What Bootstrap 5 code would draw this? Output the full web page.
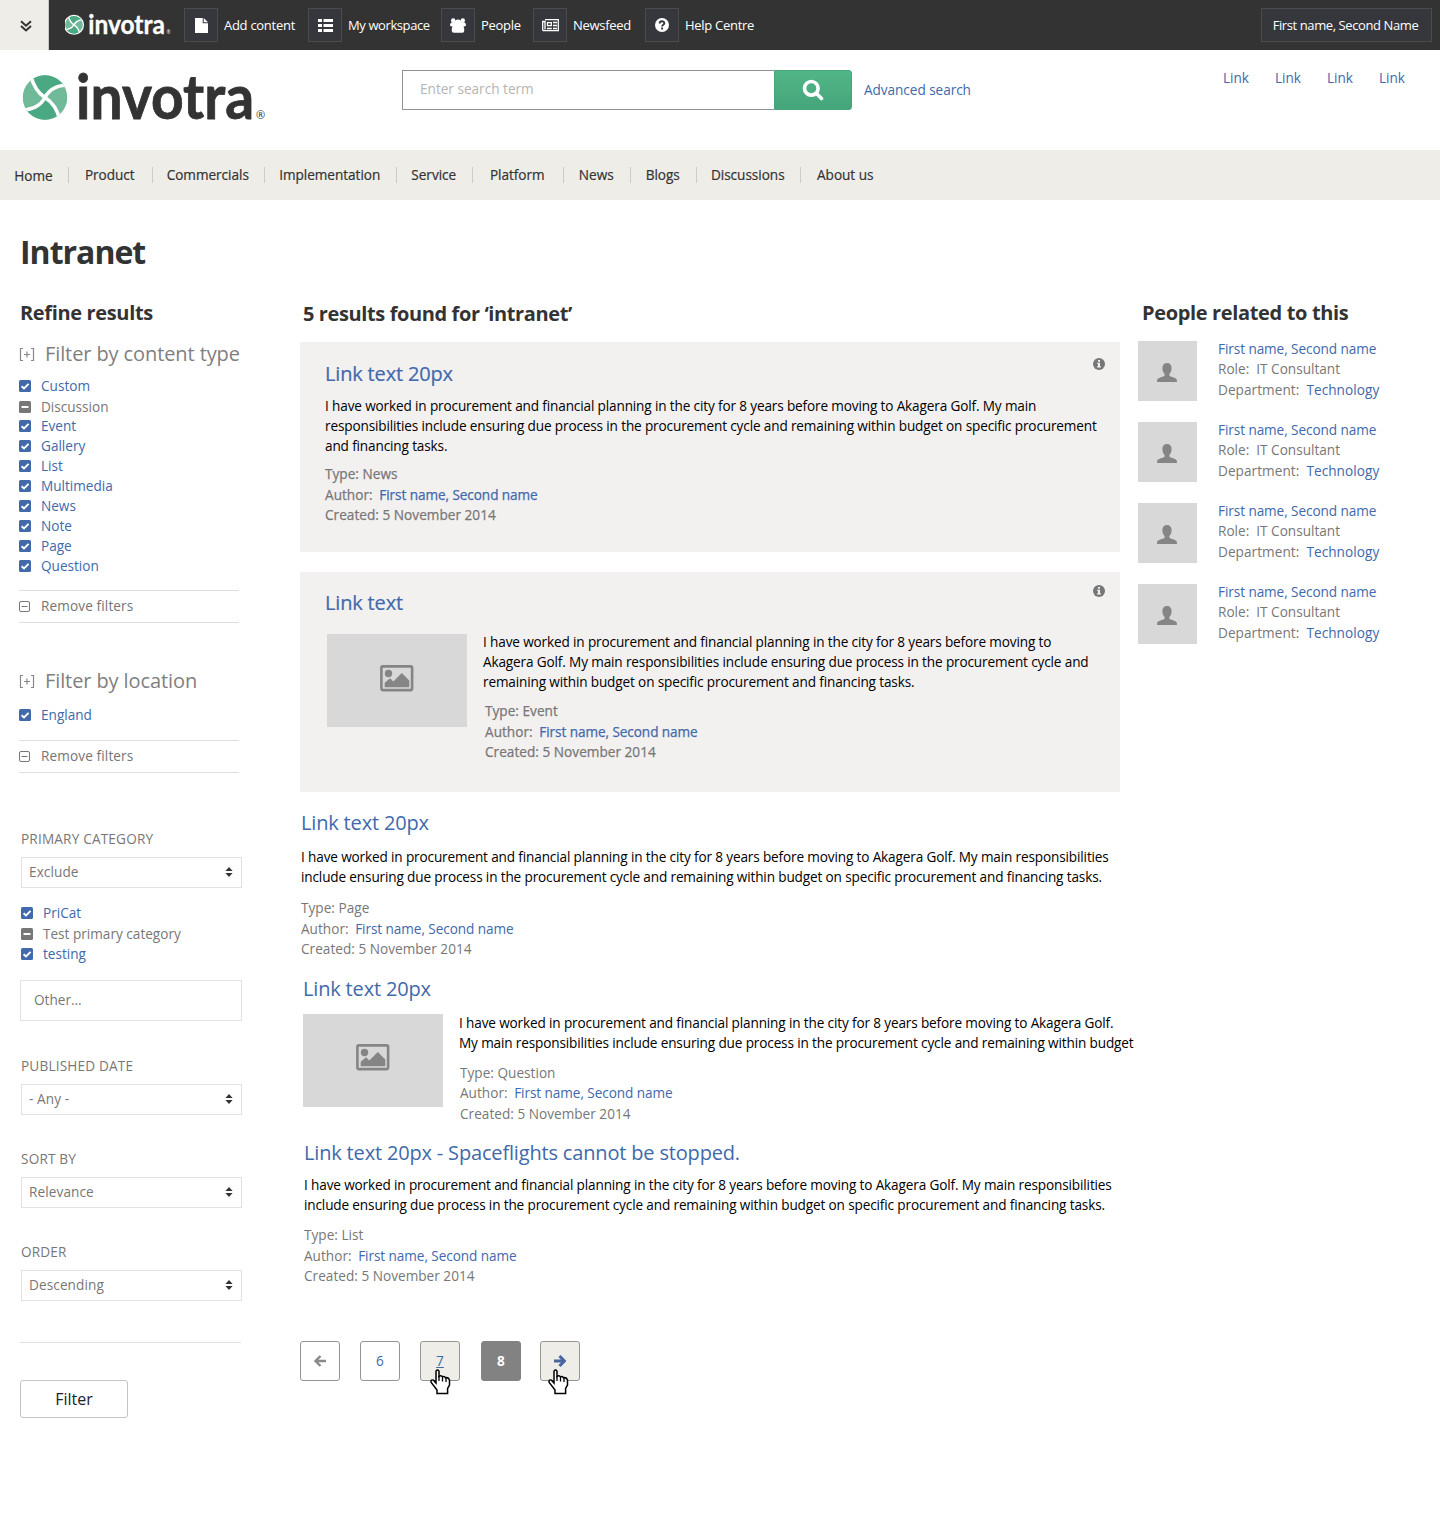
<!DOCTYPE html>
<html lang="en">
<head>
<meta charset="utf-8">
<meta name="viewport" content="width=device-width, initial-scale=1">
<title>Intranet search results</title>
<link href="https://cdn.jsdelivr.net/npm/bootstrap@5.3.0/dist/css/bootstrap.min.css" rel="stylesheet">
<style>
  :root { --link: #4169ab; --muted: #777; --dark: #333; --line: #dedede; --sand: #eeede8; }
  body { font: 13.6px/20px "Open Sans", "Noto Sans", sans-serif; letter-spacing: 0; color: var(--muted); background: #fff; }
  a { color: var(--link); text-decoration: none; }
  a:hover { color: var(--link); text-decoration: underline; }
  h1, h2, h3, p, ul, dl { margin: 0; }
  h1 { font-size: 32px; line-height: 40px; font-weight: 700; letter-spacing: -1px; color: var(--dark); }
  h2 { font-size: 20px; line-height: 24px; font-weight: 700; letter-spacing: -.35px; color: var(--dark); white-space: nowrap; }
  svg { display: block; flex: none; }

  /* utility bar */
  .util-bar { height: 50px; background: #333; color: #fff; font-size: 13px; letter-spacing: -.28px; }
  .util-toggle { width: 49px; background: var(--sand); border-right: 1px solid #c9c9c4; padding: 2px 0 0 3px; }
  .util-links { display: grid; grid-template-columns: 124px 133px 92px 112px 130px; margin-left: 13px; }
  .util-links a { color: #fff; gap: 6px; white-space: nowrap; }
  .util-links a:nth-child(2) { letter-spacing: -.4px; }
  .util-icon { width: 34px; height: 34px; background: #36373c; border: 1px solid #4b4b4e; }
  .util-user { height: 34px; width: 171px; margin-right: 8px; padding-right: 2px; background: #36373c; border: 1px solid #4b4b4e; letter-spacing: -.4px; }

  /* brand */
  .brand-text { font-family: Lato, "Open Sans", sans-serif; font-weight: 700; font-size: 62px; letter-spacing: 0; stroke: currentColor; stroke-width: .8px; }
  .brand-reg { font-family: "Open Sans", sans-serif; font-size: 11px; letter-spacing: 0; }
  .brand-main { margin-top: -16px; color: var(--dark); }

  /* masthead */
  .masthead { height: 100px; padding: 20px 35px 0 22px; }
  .search-form { width: 450px; margin-left: 136px; }
  .search-form .form-control { height: 40px; border: 1px solid #919191; border-right: 0; border-radius: 0; padding: 0 17px 3px; font-size: 13.6px; letter-spacing: 0; }
  .search-form .form-control::placeholder { color: #b5b5b5; }
  .search-go { width: 78px; height: 40px; background: linear-gradient(#51b687, #46a57b); border: 1px solid #46a57b; border-radius: 0 3px 3px 0; }
  .adv { margin: 10px 0 0 12px; letter-spacing: -.05px; }
  .quick-links { gap: 26px; margin-top: -2px; }

  /* main navigation */
  .site-nav { height: 50px; background: var(--sand); display: grid; grid-template-columns: 69px 84px 112px 132px 76px 91px 67px 66px 104px 90px; align-items: center; }
  .site-nav a { color: var(--dark); font-weight: 500; letter-spacing: -.03px; line-height: 16px; padding-right: 1.5px; text-align: center; border-right: 1px solid #ccc; -webkit-text-stroke: .2px currentColor; }
  .site-nav a:first-child { padding: 1px 1px 0 0; line-height: 15px; }
  .site-nav a:last-child { border: 0; }

  /* filters */
  .page-title { margin: 28px 0 0 20px; padding-top: 4px; }
  .page-cols { margin-top: 28px; }
  .filters { width: 221px; margin-left: 20px; padding-top: 1px; }
  .filter-head { font-size: 20px; line-height: 24px; letter-spacing: -.1px; gap: 10px; margin-left: -1px; color: #7f7f7f; white-space: nowrap; }
  .checks { list-style: none; padding: 0; margin-left: -1px; }
  .checks li { display: flex; align-items: center; gap: 10px; height: 20px; }
  .checks .is-mixed { padding-top: 2px; }
  .checks.is-inset { margin-left: 1px; }
  .remove-row { width: 220px; height: 33px; margin-left: -1px; gap: 10px; padding-bottom: 1px; border-top: 1px solid var(--line); border-bottom: 1px solid var(--line); color: #757575; letter-spacing: .12px; }
  .facet-label { display: block; margin-left: 1px; text-transform: uppercase; letter-spacing: .18px; }
  .facet-select { margin: 8px 0 0 1px; width: 221px; height: 31px; padding: 0 7px 2px; border: 1px solid #e2e2e2; border-radius: 0; color: var(--muted); font-size: 13.6px; line-height: 20px; letter-spacing: .1px;
    background-image: url("data:image/svg+xml,%3Csvg xmlns='http://www.w3.org/2000/svg' viewBox='0 0 8 10'%3E%3Cpath fill='%23333' d='M4 0 7.6 3.9H.4zM.4 6.1h7.2L4 10z'/%3E%3C/svg%3E"); background-size: 8px 10px; background-position: right 8px top 9px; }
  .other-box { width: 222px; height: 41px; border: 1px solid #e2e2e2; border-radius: 0; padding: 0 13px 2px; font-size: 13.6px; }
  .other-box::placeholder { color: var(--muted); }
  .filter-btn { width: 108px; height: 38px; border: 1px solid #c4c4c4; border-radius: 3px; background: #fff; font-size: 16px; color: #222; padding: 0; }

  /* results */
  .results { width: 820px; margin-left: 59px; padding-top: 2px; }
  .results h2 { margin-left: 3px; letter-spacing: -.39px; }
  .hit-title { font-size: 20px; line-height: 24px; font-weight: 400; letter-spacing: -.17px; }
  .promoted .hit-title { -webkit-text-stroke: .2px currentColor; }
  .hit-text { color: #000; letter-spacing: -.145px; white-space: nowrap; }
  .hit-meta { letter-spacing: .02px; }
  .hit-meta div { height: 20.5px; white-space: nowrap; }
  .hit-meta a { margin-left: 3px; letter-spacing: -.07px; }
  .promoted { background: #f3f1f0; position: relative; }
  .promoted .hit-meta { -webkit-text-stroke: .25px currentColor; letter-spacing: .03px; }
  .info-dot { position: absolute; right: 15px; }
  .thumb { width: 140px; height: 93px; background: #d8d8d8; color: #858585; padding-bottom: 5px; }
  .hit-a { height: 210px; padding: 20px 25px; }
  .hit-b { height: 220px; margin-top: 20px; padding: 19px 25px; }
  .hit-c { padding: 19px 1px 0; }
  .hit-d { padding: 17px 3px 0; }
  .hit-e { padding: 17px 4px 0; }

  /* pagination */
  .pager { margin-top: 54px; }
  .page-box { position: relative; width: 40px; height: 40px; border: 1px solid #959595; border-radius: 3px; background: #fff; }
  .page-box.is-hover { background: var(--sand); }
  .page-box.is-current { background: #828282; border-color: #828282; color: #fff; font-weight: 700; }
  .hand { position: absolute; top: 27px; }

  /* people */
  .people { width: 260px; margin-left: 18px; padding-top: 1px; }
  .person { height: 81px; gap: 21px; }
  .avatar { width: 59px; height: 60px; background: #d8d8d8; color: #858585; padding: 3px 2px 0 0; }
  .person-info { letter-spacing: 0; margin-top: -2px; white-space: nowrap; }
  .person-info div:first-child { letter-spacing: -.08px; }
  .person-info div:last-child { padding-top: 1px; letter-spacing: .05px; }
</style>
<script src="https://cdn.jsdelivr.net/npm/bootstrap@5.3.0/dist/js/bootstrap.bundle.min.js"></script>
</head>
<body>

<svg width="0" height="0" class="position-absolute" aria-hidden="true">
  <defs>
    <clipPath id="disc"><circle cx="22.5" cy="22.5" r="22.3"/></clipPath>
  </defs>
  <symbol id="globe" viewBox="0 0 45 45">
    <g clip-path="url(#disc)">
      <path fill="#70b999" d="M0 0h45v45H0z"/>
      <path fill="#4aa983" d="M8 -1C11 13 17 19 22.500 22.500C27 14 34 10 46 10V-1ZM37.500 46C35 33 29 26.500 22.500 22.500C18 30 11 34 -1 35.500V46Z"/>
      <path fill="none" stroke="#fff" stroke-width="3.600" d="M8 -1C11 13 17 19 22.500 22.500S35 33 37.500 46M46 10C34 10 27 14 22.500 22.500S11 34 -1 35.500"/>
    </g>
  </symbol>
  <symbol id="check-on" viewBox="0 0 12 12"><rect width="12" height="12" rx="1.500" fill="#4169ab"/><path d="M2.600 6.200 5 8.500 9.600 3.900" fill="none" stroke="#fff" stroke-width="1.900"/></symbol>
  <symbol id="check-mixed" viewBox="0 0 12 12"><rect width="12" height="12" rx="1.500" fill="#777"/><path d="M2.500 6h7" stroke="#fff" stroke-width="2"/></symbol>
  <symbol id="minus-box" viewBox="0 0 12 12"><rect x=".5" y="1.500" width="10" height="10" rx="1.500" fill="none" stroke="#777"/><path d="M2.500 6.500H8.500" stroke="#777"/></symbol>
  <symbol id="plus-box" viewBox="0 0 16 13"><path d="M4 .5H1.500v12H4M12 .5h2.500v12H12M8 3.500v6M5 6.500h6" fill="none" stroke="#888" stroke-width="1.200"/></symbol>
  <symbol id="info" viewBox="0 0 12 12"><circle cx="6" cy="6" r="6" fill="#777"/><path d="M5 2h2v1.700H5zM4.200 4.700H7v3.600h.9v1.300H4.100V8.300H5V6h-.8z" fill="#f3f1f0"/></symbol>
  <symbol id="picture" viewBox="0 0 34 27"><rect x="1.400" y="1.400" width="30.700" height="23.700" rx="1.500" fill="none" stroke="currentColor" stroke-width="2.600"/><circle cx="8.500" cy="8.500" r="3.700" fill="currentColor"/><path d="M4.700 22.300v-4.500l5.400-4.600 3.200 3.200L21.800 8l7.500 7.500v6.800z" fill="currentColor"/></symbol>
  <symbol id="person" viewBox="0 0 20 19"><path fill="currentColor" d="M10 0c3 0 4.600 2 4.600 5 0 2.600-.8 4.500-2.200 5.900v1.900c1.700 1.300 7.100 2 7.500 4.300V19H.1v-1.900c.4-2.300 5.800-3 7.500-4.300v-1.900C6.200 9.500 5.400 7.600 5.400 5c0-3 1.600-5 4.600-5z"/></symbol>
  <symbol id="hand" viewBox="0 0 21 26"><path d="M6 2.200Q7.500 0 9 2.200V7.500Q11 5.800 12.500 7.800 14.500 6.800 15.500 8.800 18.500 8 19.500 11V16L17.600 19.500V24.500H7V21L1.200 13.500Q.3 10 3.500 11.200L6 14Z" fill="#fff" stroke="#000" stroke-width="1.500"/><path d="M9 7v5M12.500 8v4.500M16 9v4" stroke="#000" stroke-width="1.300"/></symbol>
</svg>

<header>
  <div class="util-bar d-flex align-items-stretch">
    <a href="#" class="util-toggle d-flex align-items-center justify-content-center" aria-label="Collapse">
      <svg width="12" height="12" viewBox="0 0 12 12"><path d="M1 1.200 6 5.700l5-4.500M1 6 6 10.500 11 6" fill="none" stroke="#333" stroke-width="2"/></svg>
    </a>
    <a href="#" class="text-white ms-3" aria-label="invotra">
      <svg width="106" height="50" viewBox="0 -35 242 114">
        <circle cx="20.500" cy="21.500" r="23" fill="#fff"/><use href="#globe" x="0" y="1" width="41" height="41"/>
        <text class="brand-text" x="53" y="43" textLength="175" lengthAdjust="spacingAndGlyphs" fill="currentColor">invotra</text>
        <text class="brand-reg" x="232" y="43" fill="currentColor">®</text>
      </svg>
    </a>
    <nav class="util-links align-items-center">
      <a href="#" class="d-flex align-items-center"><span class="util-icon d-flex align-items-center justify-content-center"><svg width="13" height="15" viewBox="0 0 13 15"><path fill="#fff" d="M0 0h7.700v5.300H13V15H0zM8.700 0 13 4.300H8.700z"/></svg></span>Add content</a>
      <a href="#" class="d-flex align-items-center"><span class="util-icon d-flex align-items-center justify-content-center"><svg width="15" height="13" viewBox="0 0 15 13"><path fill="#fff" d="M0 0h4v3H0zM5.500 0H15v3H5.500zM0 5h4v3H0zM5.500 5H15v3H5.500zM0 10h4v3H0zM5.500 10H15v3H5.500z"/></svg></span>My workspace</a>
      <a href="#" class="d-flex align-items-center"><span class="util-icon d-flex align-items-center justify-content-center"><svg width="16" height="15" viewBox="0 0 16 15"><g fill="#fff"><circle cx="3.200" cy="2.500" r="2.200"/><circle cx="12.800" cy="2.500" r="2.200"/><circle cx="8" cy="4.800" r="3.200"/><path d="M0 7.500Q0 4.500 2.500 4.300H13.500Q16 4.500 16 7.500 15.500 8.500 13.500 8.500 14.300 10 14.300 12.500T12 14.800H4Q1.700 14.800 1.700 12.500T2.500 8.500Q.5 8.500 0 7.500z"/></g></svg></span>People</a>
      <a href="#" class="d-flex align-items-center"><span class="util-icon d-flex align-items-center justify-content-center"><svg width="17" height="13" viewBox="0 0 17 13"><path d="M3 .700h13.300v11H2Q.7 11.700.7 10.500V2.500H3V10.500" fill="none" stroke="#fff" stroke-width="1.300"/><path d="M5.500 3.700h3.800v3H5.500zM5 9.500h4.800M11 3.500h4M11 6.500h4M11 9.500h4" fill="none" stroke="#fff" stroke-width="1.300"/></svg></span>Newsfeed</a>
      <a href="#" class="d-flex align-items-center"><span class="util-icon d-flex align-items-center justify-content-center"><svg width="14" height="14" viewBox="0 0 14 14"><circle cx="7" cy="7" r="7" fill="#fff"/><path d="M4.700 5.400C4.700 2.500 9.300 2.600 9.300 5.200 9.300 6.800 7.100 6.700 7.100 8.500M7.100 9.500v1.900" fill="none" stroke="#36373c" stroke-width="1.900"/></svg></span>Help Centre</a>
    </nav>
    <a href="#" class="util-user d-flex align-items-center justify-content-center text-white ms-auto align-self-center">First name, Second Name</a>
  </div>

  <div class="masthead d-flex align-items-start">
    <a href="#" class="brand-main" aria-label="invotra">
      <svg width="244" height="80" viewBox="0 0 244 80">
        <use href="#globe" x="0.500" y="21" width="45" height="45"/>
        <text class="brand-text" x="54" y="65" textLength="178" lengthAdjust="spacingAndGlyphs" fill="currentColor">invotra</text>
        <text class="brand-reg" x="234" y="65" fill="currentColor">®</text>
      </svg>
    </a>
    <form class="search-form d-flex">
      <input class="form-control" type="text" placeholder="Enter search term">
      <button type="button" class="search-go d-flex align-items-center justify-content-center p-0 flex-shrink-0" aria-label="Search"><svg width="22" height="22" viewBox="0 0 22 22"><circle cx="9.300" cy="9.300" r="6.800" fill="none" stroke="#fff" stroke-width="3.600"/><path d="m14.500 14.500 5 5" stroke="#fff" stroke-width="3.600" stroke-linecap="round"/></svg></button>
    </form>
    <a href="#" class="adv text-nowrap">Advanced search</a>
    <div class="quick-links d-flex ms-auto"><a href="#">Link</a><a href="#">Link</a><a href="#">Link</a><a href="#">Link</a></div>
  </div>

  <nav class="site-nav">
    <a href="#">Home</a><a href="#">Product</a><a href="#">Commercials</a><a href="#">Implementation</a><a href="#">Service</a><a href="#">Platform</a><a href="#">News</a><a href="#">Blogs</a><a href="#">Discussions</a><a href="#">About us</a>
  </nav>
</header>

<main>
  <h1 class="page-title">Intranet</h1>
  <div class="page-cols d-flex align-items-start">

    <aside class="filters flex-shrink-0">
      <h2>Refine results</h2>
      <div class="filter-head d-flex align-items-center" style="margin-top:17px"><svg width="16" height="13"><use href="#plus-box"/></svg>Filter by content type</div>
      <ul class="checks" style="margin-top:10px">
        <li><svg width="12" height="12"><use href="#check-on"/></svg><a href="#">Custom</a></li>
        <li class="is-mixed"><svg width="12" height="12"><use href="#check-mixed"/></svg>Discussion</li>
        <li><svg width="12" height="12"><use href="#check-on"/></svg><a href="#">Event</a></li>
        <li><svg width="12" height="12"><use href="#check-on"/></svg><a href="#">Gallery</a></li>
        <li><svg width="12" height="12"><use href="#check-on"/></svg><a href="#">List</a></li>
        <li><svg width="12" height="12"><use href="#check-on"/></svg><a href="#">Multimedia</a></li>
        <li><svg width="12" height="12"><use href="#check-on"/></svg><a href="#">News</a></li>
        <li><svg width="12" height="12"><use href="#check-on"/></svg><a href="#">Note</a></li>
        <li><svg width="12" height="12"><use href="#check-on"/></svg><a href="#">Page</a></li>
        <li><svg width="12" height="12"><use href="#check-on"/></svg><a href="#">Question</a></li>
      </ul>
      <div class="remove-row d-flex align-items-center" style="margin-top:14px"><svg width="12" height="12"><use href="#minus-box"/></svg>Remove filters</div>

      <div class="filter-head d-flex align-items-center" style="margin-top:46px"><svg width="16" height="13"><use href="#plus-box"/></svg>Filter by location</div>
      <ul class="checks" style="margin-top:12px">
        <li><svg width="12" height="12"><use href="#check-on"/></svg><a href="#">England</a></li>
      </ul>
      <div class="remove-row d-flex align-items-center" style="margin-top:15px"><svg width="12" height="12"><use href="#minus-box"/></svg>Remove filters</div>

      <label class="facet-label" style="margin-top:56px">Primary category</label>
      <select class="form-select facet-select"><option>Exclude</option></select>
      <ul class="checks is-inset" style="margin-top:15px">
        <li><svg width="12" height="12"><use href="#check-on"/></svg><a href="#">PriCat</a></li>
        <li class="is-mixed"><svg width="12" height="12"><use href="#check-mixed"/></svg>Test primary category</li>
        <li class="is-mixed"><svg width="12" height="12"><use href="#check-on"/></svg><a href="#">testing</a></li>
      </ul>
      <input class="form-control other-box" style="margin-top:17px" type="text" placeholder="Other...">
      <label class="facet-label" style="margin-top:35px">Published date</label>
      <select class="form-select facet-select"><option>- Any -</option></select>
      <label class="facet-label" style="margin-top:34px">Sort by</label>
      <select class="form-select facet-select"><option>Relevance</option></select>
      <label class="facet-label" style="margin-top:34px">Order</label>
      <select class="form-select facet-select"><option>Descending</option></select>
      <div class="border-top" style="margin-top:41px"></div>
      <button type="button" class="btn filter-btn" style="margin-top:37px">Filter</button>
    </aside>

    <section class="results flex-shrink-0">
      <h2>5 results found for ‘intranet’</h2>
      <article class="promoted hit-a" style="margin-top:16px">
        <svg class="info-dot" width="12" height="12" style="top:16px"><use href="#info"/></svg>
        <h3 class="hit-title"><a href="#">Link text 20px</a></h3>
        <p class="hit-text" style="margin-top:10px">I have worked in procurement and financial planning in the city for 8 years before moving to Akagera Golf. My main<br>responsibilities include ensuring due process in the procurement cycle and remaining within budget on specific procurement<br>and financing tasks.</p>
        <div class="hit-meta" style="margin-top:8px"><div>Type: News</div><div>Author: <a href="#">First name, Second name</a></div><div>Created: 5 November 2014</div></div>
      </article>
      <article class="promoted hit-b">
        <svg class="info-dot" width="12" height="12" style="top:13px"><use href="#info"/></svg>
        <h3 class="hit-title"><a href="#">Link text</a></h3>
        <div class="d-flex" style="margin:17px 0 0 2px">
          <div class="thumb d-flex align-items-center justify-content-center flex-shrink-0" style="margin-top:2px"><svg width="34" height="27"><use href="#picture"/></svg></div>
          <div class="ms-3">
            <p class="hit-text">I have worked in procurement and financial planning in the city for 8 years before moving to<br>Akagera Golf. My main responsibilities include ensuring due process in the procurement cycle and<br>remaining within budget on specific procurement and financing tasks.</p>
            <div class="hit-meta" style="margin:9px 0 0 2px"><div>Type: Event</div><div>Author: <a href="#">First name, Second name</a></div><div>Created: 5 November 2014</div></div>
          </div>
        </div>
      </article>
      <article class="hit-c">
        <h3 class="hit-title"><a href="#">Link text 20px</a></h3>
        <p class="hit-text" style="margin-top:12px">I have worked in procurement and financial planning in the city for 8 years before moving to Akagera Golf. My main responsibilities<br>include ensuring due process in the procurement cycle and remaining within budget on specific procurement and financing tasks.</p>
        <div class="hit-meta" style="margin-top:11px"><div>Type: Page</div><div>Author: <a href="#">First name, Second name</a></div><div>Created: 5 November 2014</div></div>
      </article>
      <article class="hit-d">
        <h3 class="hit-title"><a href="#">Link text 20px</a></h3>
        <div class="d-flex" style="margin-top:12px">
          <div class="thumb d-flex align-items-center justify-content-center flex-shrink-0" style="margin-top:1px"><svg width="34" height="27"><use href="#picture"/></svg></div>
          <div class="ms-3">
            <p class="hit-text">I have worked in procurement and financial planning in the city for 8 years before moving to Akagera Golf.<br>My main responsibilities include ensuring due process in the procurement cycle and remaining within budget</p>
            <div class="hit-meta" style="margin:10px 0 0 1px"><div>Type: Question</div><div>Author: <a href="#">First name, Second name</a></div><div>Created: 5 November 2014</div></div>
          </div>
        </div>
      </article>
      <article class="hit-e">
        <h3 class="hit-title"><a href="#">Link text 20px - Spaceflights cannot be stopped.</a></h3>
        <p class="hit-text" style="margin-top:10px">I have worked in procurement and financial planning in the city for 8 years before moving to Akagera Golf. My main responsibilities<br>include ensuring due process in the procurement cycle and remaining within budget on specific procurement and financing tasks.</p>
        <div class="hit-meta" style="margin-top:10px"><div>Type: List</div><div>Author: <a href="#">First name, Second name</a></div><div>Created: 5 November 2014</div></div>
      </article>
      <nav class="pager d-flex">
        <a href="#" class="page-box d-flex align-items-center justify-content-center" aria-label="Previous"><svg width="12" height="12" viewBox="0 0 12 12"><path d="M12 6H2M6.500 1 1.500 6l5 5" fill="none" stroke="#8a8a8a" stroke-width="2.400"/></svg></a>
        <a href="#" class="page-box d-flex align-items-center justify-content-center" style="margin-left:20px">6</a>
        <a href="#" class="page-box is-hover d-flex align-items-center justify-content-center text-decoration-underline" style="margin-left:20px">7<svg class="hand" width="21" height="26" style="left:9px"><use href="#hand"/></svg></a>
        <a href="#" class="page-box is-current d-flex align-items-center justify-content-center" style="margin-left:21px">8</a>
        <a href="#" class="page-box is-hover d-flex align-items-center justify-content-center" style="margin-left:19px" aria-label="Next"><svg width="12" height="12" viewBox="0 0 12 12"><path d="M0 6h10M5.500 1l5 5-5 5" fill="none" stroke="#4a66a0" stroke-width="3"/></svg><svg class="hand" width="21" height="26" style="left:7px"><use href="#hand"/></svg></a>
      </nav>
    </section>

    <aside class="people flex-shrink-0">
      <h2 class="ms-1">People related to this</h2>
      <div style="margin-top:16px">
        <div class="person d-flex"><div class="avatar d-flex align-items-center justify-content-center align-self-start"><svg width="20" height="19"><use href="#person"/></svg></div><div class="person-info"><div><a href="#">First name, Second name</a></div><div>Role:&nbsp; IT Consultant</div><div>Department:&nbsp; <a href="#">Technology</a></div></div></div>
        <div class="person d-flex"><div class="avatar d-flex align-items-center justify-content-center align-self-start"><svg width="20" height="19"><use href="#person"/></svg></div><div class="person-info"><div><a href="#">First name, Second name</a></div><div>Role:&nbsp; IT Consultant</div><div>Department:&nbsp; <a href="#">Technology</a></div></div></div>
        <div class="person d-flex"><div class="avatar d-flex align-items-center justify-content-center align-self-start"><svg width="20" height="19"><use href="#person"/></svg></div><div class="person-info"><div><a href="#">First name, Second name</a></div><div>Role:&nbsp; IT Consultant</div><div>Department:&nbsp; <a href="#">Technology</a></div></div></div>
        <div class="person d-flex"><div class="avatar d-flex align-items-center justify-content-center align-self-start"><svg width="20" height="19"><use href="#person"/></svg></div><div class="person-info"><div><a href="#">First name, Second name</a></div><div>Role:&nbsp; IT Consultant</div><div>Department:&nbsp; <a href="#">Technology</a></div></div></div>
      </div>
    </aside>
  </div>
</main>
</body>
</html>
